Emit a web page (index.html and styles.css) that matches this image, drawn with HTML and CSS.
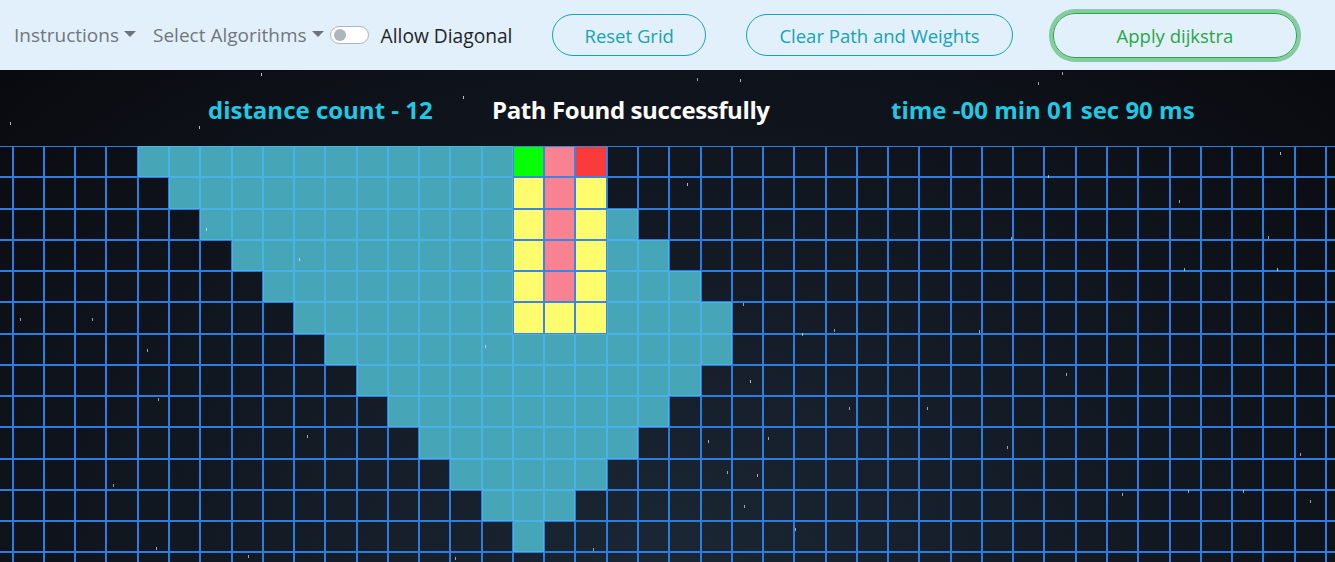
FILE: index.html
```html
<!DOCTYPE html>
<html lang="en">
<head>
<meta charset="utf-8">
<title>Pathfinding Visualizer</title>
<link rel="stylesheet" href="styles.css">
</head>
<body>
<nav class="navbar">
  <div class="nav-link dropdown">Instructions<span class="caret"></span></div>
  <div class="nav-link dropdown algo">Select Algorithms<span class="caret"></span></div>
  <label class="switch">
    <span class="track"><span class="knob"></span></span>
    <span class="switch-label">Allow Diagonal</span>
  </label>
  <button class="btn btn-info">Reset Grid</button>
  <button class="btn btn-info btn-wide">Clear Path and Weights</button>
  <button class="btn btn-success btn-focus">Apply dijkstra</button>
</nav>
<main class="board">
  <div class="status">
    <h4 class="stat stat-cyan">distance count - 12</h4>
    <h4 class="stat stat-white stat-tight">Path Found successfully</h4>
    <h4 class="stat stat-cyan">time -00 min 01 sec 90 ms</h4>
  </div>
  <div class="grid-wrap">
    <div class="grid" id="grid"></div>
  </div>
  <div class="snow"></div>
</main>
<script src="grid.js"></script>
</body>
</html>
```

FILE: styles.css
```css
* { box-sizing: border-box; }
html, body { margin: 0; padding: 0; }
body {
  font-family: "Open Sans", "Noto Sans", sans-serif;
  background: #0d1017;
  overflow: hidden;
  height: 562px;
}
.navbar {
  height: 70px;
  background: #e2f0fc;
  display: flex;
  align-items: center;
  padding-left: 14px;
}
.nav-link {
  font-size: 19px;
  color: #71767c;
  display: flex;
  align-items: center;
  white-space: nowrap;
}
.algo { margin-left: 17px; }
.caret {
  display: inline-block;
  margin-left: 5px;
  margin-top: -2px;
  border-top: 6px solid #6f7479;
  border-left: 6px solid transparent;
  border-right: 6px solid transparent;
}
.switch {
  display: flex;
  align-items: center;
  margin-left: 6px;
}
.track {
  width: 39px;
  height: 18px;
  border: 1px solid #adb5bd;
  border-radius: 9px;
  background: #fff;
  display: flex;
  align-items: center;
  padding-left: 3px;
}
.knob {
  width: 12px;
  height: 12px;
  border-radius: 50%;
  background: #adb5bd;
}
.switch-label {
  margin-left: 12px;
  font-size: 19.2px;
  color: #212529;
  white-space: nowrap;
}
.btn {
  font-family: "Open Sans", "Noto Sans", sans-serif;
  font-size: 18.5px;
  background: transparent;
  border: 1px solid;
  border-radius: 22px;
  height: 42px;
  padding: 0 31px;
  margin-left: 40px;
  white-space: nowrap;
}
.btn-wide { padding: 0 32.5px; }
.btn-info { color: #17a2b8; border-color: #17a2b8; }
.btn-success {
  color: #28a745;
  border-color: #28a745;
  height: 45px;
  padding: 0 62.5px;
  margin-left: 40px;
}
.btn-focus { box-shadow: 0 0 0 4px rgba(40, 167, 69, 0.5); }

.board {
  position: relative;
  height: 492px;
  overflow: hidden;
  background: radial-gradient(ellipse at bottom, #1b2735 0%, #090a0f 100%);
}
.status {
  height: 76px;
  display: grid;
  grid-template-columns: 284px 399px auto;
  align-items: center;
  padding-left: 208px;
  padding-top: 4px;
}
.stat {
  margin: 0;
  font-size: 24px;
  font-weight: 700;
  line-height: 32px;
  white-space: nowrap;
}
.stat-cyan { color: #1fc8e3; }
.stat-white { color: #ffffff; }
.stat-tight { letter-spacing: -0.4px; }

.grid-wrap { overflow: hidden; }
.grid {
  display: grid;
  grid-template-columns: repeat(44, 31.28px);
  grid-auto-rows: 31.28px;
  margin-left: -18.58px;
  width: 1376.32px;
}
.cell {
  border: 1px solid #2b7de2;
}
.cell.visited { background: #46a6b8; border-color: #4ab2e6; }
.cell.frontier { background: #fffd6e; border-color: #3b86e2; }
.cell.path { background: #f8828f; border-color: #3b86e2; }
.cell.start { background: #06ff06; border-color: #3b86e2; }
.cell.end { background: #fa3a3b; border-color: #3b86e2; }

.snow {
  position: absolute;
  left: 0;
  top: 0;
  width: 1px;
  height: 3px;
  pointer-events: none;
  box-shadow:
    261px 3px rgba(255,255,255,.75),
    463px 26px rgba(255,255,255,.75),
    10px 52px rgba(255,255,255,.7),
    199px 56px rgba(255,255,255,.7),
    697px 8px rgba(255,255,255,.6),
    740px 9px rgba(255,255,255,.7),
    1062px 2px rgba(255,255,255,.6),
    1280px 82px rgba(255,255,255,.7),
    1038px 12px rgba(255,255,255,.6),
    687px 113px rgba(255,255,255,.7),
    1048px 105px rgba(255,255,255,.6),
    1179px 130px rgba(255,255,255,.6),
    206px 158px rgba(255,255,255,.5),
    299px 188px rgba(255,255,255,.6),
    1268px 166px rgba(255,255,255,.6),
    1277px 198px rgba(255,255,255,.7),
    1184px 198px rgba(255,255,255,.6),
    1011px 167px rgba(255,255,255,.6),
    743px 233px rgba(255,255,255,.6),
    20px 248px rgba(255,255,255,.6),
    92px 248px rgba(255,255,255,.6),
    802px 263px rgba(255,255,255,.6),
    834px 259px rgba(255,255,255,.6),
    147px 279px rgba(255,255,255,.6),
    485px 275px rgba(255,255,255,.5),
    979px 260px rgba(255,255,255,.6),
    750px 310px rgba(255,255,255,.7),
    1066px 303px rgba(255,255,255,.6),
    158px 328px rgba(255,255,255,.6),
    849px 337px rgba(255,255,255,.6),
    927px 337px rgba(255,255,255,.6),
    307px 365px rgba(255,255,255,.6),
    708px 370px rgba(255,255,255,.6),
    768px 367px rgba(255,255,255,.6),
    1007px 376px rgba(255,255,255,.6),
    1300px 383px rgba(255,255,255,.6),
    113px 414px rgba(255,255,255,.6),
    727px 401px rgba(255,255,255,.6),
    757px 404px rgba(255,255,255,.6),
    1122px 423px rgba(255,255,255,.6),
    1188px 420px rgba(255,255,255,.6),
    1243px 420px rgba(255,255,255,.6),
    156px 477px rgba(255,255,255,.6),
    248px 485px rgba(255,255,255,.6),
    455px 487px rgba(255,255,255,.6),
    593px 478px rgba(255,255,255,.6),
    795px 458px rgba(255,255,255,.6),
    744px 435px rgba(255,255,255,.6),
    1310px 430px rgba(255,255,255,.6);
}
```

FILE: grid.js
```js
(function () {
  var COLS = 44, ROWS = 14;
  // visited ranges per row, columns counted from the first full column (0)
  var visited = {
    0: [[4, 15]], 1: [[5, 15]], 2: [[6, 15], [19, 19]], 3: [[7, 15], [19, 20]],
    4: [[8, 15], [19, 21]], 5: [[9, 15], [19, 22]], 6: [[10, 22]], 7: [[11, 21]],
    8: [[12, 20]], 9: [[13, 19]], 10: [[14, 18]], 11: [[15, 17]], 12: [[16, 16]]
  };
  var special = {
    "0,16": "start", "0,17": "path", "0,18": "end",
    "1,16": "frontier", "1,17": "path", "1,18": "frontier",
    "2,16": "frontier", "2,17": "path", "2,18": "frontier",
    "3,16": "frontier", "3,17": "path", "3,18": "frontier",
    "4,16": "frontier", "4,17": "path", "4,18": "frontier",
    "5,16": "frontier", "5,17": "frontier", "5,18": "frontier"
  };
  var grid = document.getElementById("grid");
  var frag = document.createDocumentFragment();
  for (var r = 0; r < ROWS; r++) {
    for (var i = 0; i < COLS; i++) {
      var c = i - 1;
      var el = document.createElement("div");
      el.className = "cell";
      var key = r + "," + c;
      if (special[key]) {
        el.className += " " + special[key];
      } else if (visited[r]) {
        for (var k = 0; k < visited[r].length; k++) {
          var rg = visited[r][k];
          if (c >= rg[0] && c <= rg[1]) { el.className += " visited"; break; }
        }
      }
      frag.appendChild(el);
    }
  }
  grid.appendChild(frag);
})();
```
